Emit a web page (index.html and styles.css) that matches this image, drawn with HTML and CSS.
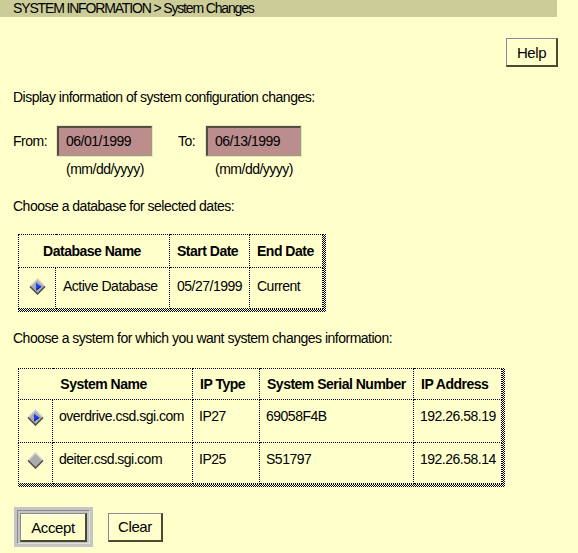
FILE: index.html
```html
<!DOCTYPE html>
<html>
<head>
<meta charset="utf-8">
<title>System Changes</title>
<link rel="stylesheet" href="styles.css">
</head>
<body>
<div class="titlebar">SYSTEM INFORMATION &gt; System Changes</div>
<div class="help-row"><button class="btn btn-help">Help</button></div>
<p class="line desc">Display information of system configuration changes:</p>
<div class="dates">
  <span class="lbl lbl-from">From:</span>
  <div class="field">
    <div class="input">06/01/1999</div>
    <div class="hint">(mm/dd/yyyy)</div>
  </div>
  <span class="lbl lbl-to">To:</span>
  <div class="field">
    <div class="input">06/13/1999</div>
    <div class="hint">(mm/dd/yyyy)</div>
  </div>
</div>
<p class="line choose1">Choose a database for selected dates:</p>
<div class="frame frame1">
<table class="tbl tbl1">
  <colgroup><col class="c-r1"><col class="c-n1"><col class="c-s1"><col class="c-e1"></colgroup>
  <tr class="hdr h1"><th colspan="2" class="center">Database Name</th><th>Start Date</th><th>End Date</th></tr>
  <tr class="row r1"><td class="radio"><svg class="dia" width="17" height="17" viewBox="0 0 17 17"><polygon points="8.5,1 16,8.5 8.5,16 1,8.5" fill="#acacac"/><polyline points="1,8.5 8.5,1 16,8.5" fill="none" stroke="#d4d4d4" stroke-width="1.5"/><polyline points="1,8.5 8.5,16 16,8.5" fill="none" stroke="#4a4a4a" stroke-width="1.5"/><polygon points="7,4.8 12.2,8.5 7,12.2" fill="#1e3cff"/><polyline points="7,12.2 12.2,8.5" stroke="#00106e" fill="none"/></svg></td><td>Active Database</td><td>05/27/1999</td><td>Current</td></tr>
</table>
</div>
<p class="line choose2">Choose a system for which you want system changes information:</p>
<div class="frame frame2">
<table class="tbl tbl2">
  <colgroup><col class="c-r2"><col class="c-n2"><col class="c-t2"><col class="c-s2"><col class="c-a2"></colgroup>
  <tr class="hdr h2"><th colspan="2" class="center">System Name</th><th>IP Type</th><th>System Serial Number</th><th>IP Address</th></tr>
  <tr class="row r2a"><td class="radio"><svg class="dia" width="17" height="17" viewBox="0 0 17 17"><polygon points="8.5,1 16,8.5 8.5,16 1,8.5" fill="#acacac"/><polyline points="1,8.5 8.5,1 16,8.5" fill="none" stroke="#d4d4d4" stroke-width="1.5"/><polyline points="1,8.5 8.5,16 16,8.5" fill="none" stroke="#4a4a4a" stroke-width="1.5"/><polygon points="7,4.8 12.2,8.5 7,12.2" fill="#1e3cff"/><polyline points="7,12.2 12.2,8.5" stroke="#00106e" fill="none"/></svg></td><td>overdrive.csd.sgi.com</td><td>IP27</td><td>69058F4B</td><td>192.26.58.19</td></tr>
  <tr class="row r2b"><td class="radio"><svg class="dia" width="17" height="17" viewBox="0 0 17 17"><polygon points="8.5,1 16,8.5 8.5,16 1,8.5" fill="#acacac"/><polyline points="1,8.5 8.5,1 16,8.5" fill="none" stroke="#d4d4d4" stroke-width="1.5"/><polyline points="1,8.5 8.5,16 16,8.5" fill="none" stroke="#4a4a4a" stroke-width="1.5"/></svg></td><td>deiter.csd.sgi.com</td><td>IP25</td><td>S51797</td><td>192.26.58.14</td></tr>
</table>
</div>
<div class="actions">
  <div class="default-frame"><div class="default-inner"><button class="btn btn-accept">Accept</button></div></div>
  <button class="btn btn-clear">Clear</button>
</div>
</body>
</html>
```
FILE: styles.css
```css
html, body {
  margin: 0;
  padding: 0;
  background: #ffffcc;
}
body {
  font-family: "Liberation Sans", Arial, sans-serif;
  font-size: 14px;
  line-height: 17px;
  letter-spacing: -0.5px;
  color: #000;
}
.titlebar {
  width: 544px;
  height: 17px;
  background: #cccc99;
  padding-left: 13px;
  line-height: 16px;
  font-size: 14px;
  letter-spacing: -1.15px;
}
.help-row {
  width: 558px;
  display: flex;
  justify-content: flex-end;
  margin-top: 21px;
}
.btn {
  font-family: inherit;
  font-size: 15px;
  letter-spacing: -0.4px;
  color: #000;
  background: #ffffcc;
  border-style: solid;
  border-width: 1px 2px 2px 1px;
  border-color: #8c8c70 #4a4a30 #4a4a30 #8c8c70;
  box-shadow: inset 1px 1px 0 #ffffff;
  padding: 0;
  margin: 0;
  cursor: pointer;
}
.btn-help {
  width: 52px;
  height: 29px;
}
.line {
  margin: 0;
  padding-left: 13px;
  height: 17px;
}
.desc { margin-top: 22px; }
.dates {
  display: flex;
  align-items: flex-start;
  margin-top: 20px;
  padding-left: 13px;
}
.lbl {
  line-height: 31px;
}
.lbl-from { width: 44px; }
.lbl-to { margin-left: 26px; width: 28px; }
.field {
  display: flex;
  flex-direction: column;
}
.input {
  width: 85px;
  height: 27px;
  line-height: 27px;
  padding-left: 7px;
  background: #bb8d8d;
  border-style: solid;
  border-width: 2px 1px 1px 2px;
  border-color: #505040 #9a9a80 #9a9a80 #505040;
  box-shadow: 0 0 0 1px #e8e8c0;
}
.hint {
  padding-left: 9px;
  margin-top: 5px;
}
.choose1 { margin-top: 20px; }
.frame {
  display: inline-block;
  vertical-align: top;
  margin-left: 18px;
  padding: 0 3px 3px 0;
  background: repeating-conic-gradient(#000 0 25%, #ffffcc 0 50%) 0 0 / 2px 2px;
}
.frame1 { margin-top: 19px; }
.tbl {
  border-collapse: collapse;
  table-layout: fixed;
  background: #ffffcc;
  border-top: 1px dotted #000;
  border-left: 1px dotted #000;
}
.tbl1 { width: 305px; }
.tbl2 { width: 483px; }
.tbl th, .tbl td {
  border: 1px dotted #000;
  padding: 0 0 0 7px;
  text-align: left;
  white-space: nowrap;
  overflow: hidden;
}
.tbl th {
  font-weight: bold;
  vertical-align: middle;
}
.tbl th.center {
  text-align: center;
  padding: 0 4px 0 0;
}
.tbl td {
  vertical-align: top;
}
.tbl td.radio {
  padding: 0;
  text-align: center;
}
.dia {
  display: block;
  margin: 0 auto;
}
.c-r1 { width: 37px; }
.c-n1 { width: 114px; }
.c-s1 { width: 80px; }
.c-e1 { width: 73px; }
.h1 { height: 33px; }
.r1 { height: 41px; }
.r1 td { padding-top: 10px; }
.r1 td.radio { padding-top: 10px; }

.choose2 { margin-top: 18px; }
.frame2 { margin-top: 21px; }
.c-r2 { width: 34px; }
.c-n2 { width: 140px; }
.c-t2 { width: 67px; }
.c-s2 { width: 154px; }
.c-a2 { width: 88px; }
.h2 { height: 31px; }
.r2a { height: 43px; }
.r2b { height: 41px; }
.r2a td, .r2b td { padding-top: 8px; }
.tbl2 td { padding-left: 6px; }
.tbl2 td.radio { padding-left: 0; padding-top: 9px; }
.tbl2 th { padding-left: 7px; }

.actions {
  display: flex;
  align-items: center;
  margin-top: 20px;
  padding-left: 14px;
}
.default-frame {
  background: #c4c4c4;
  padding: 3px;
}
.default-inner {
  border: 1px solid;
  border-color: #8a8a8a #e0e0e0 #e0e0e0 #8a8a8a;
  padding: 2px 2px 1px 2px;
  background: #c4c4c4;
}
.default-inner .btn { display: block; }
.btn-accept {
  width: 67px;
  height: 29px;
}
.btn-clear {
  margin-left: 15px;
  width: 55px;
  height: 29px;
}
```
